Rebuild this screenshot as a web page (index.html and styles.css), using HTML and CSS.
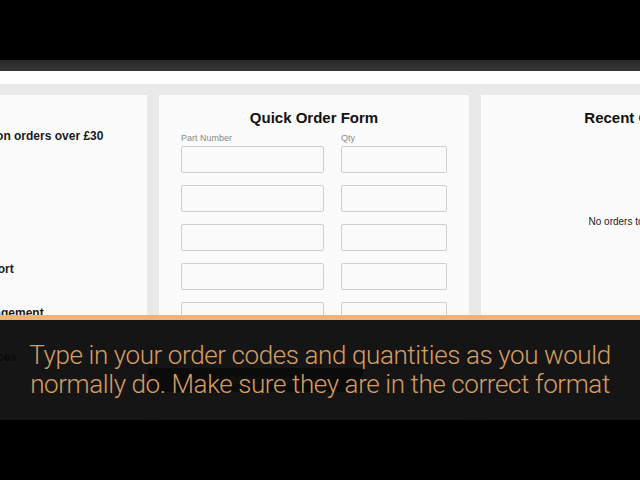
FILE: index.html
```html
<!DOCTYPE html>
<html>
<head>
<meta charset="utf-8">
<link rel="stylesheet" href="styles.css">
</head>
<body>
<div class="screen">
  <div class="topbar"></div>
  <div class="strip"></div>
  <div class="content">
    <div class="panel left">
      <ul class="features">
        <li class="f1">Free UK delivery on orders over £30</li>
        <li class="f2">Technical Support</li>
        <li class="f3">Account Management</li>
        <li class="f4">Competitive Prices</li>
      </ul>
    </div>
    <div class="panel middle">
      <h2 class="title">Quick Order Form</h2>
      <div class="form">
        <div class="col part">
          <label class="lbl">Part Number</label>
          <div class="inp"></div>
          <div class="inp"></div>
          <div class="inp"></div>
          <div class="inp"></div>
          <div class="inp"></div>
        </div>
        <div class="col qty">
          <label class="lbl">Qty</label>
          <div class="inp"></div>
          <div class="inp"></div>
          <div class="inp"></div>
          <div class="inp"></div>
          <div class="inp"></div>
        </div>
      </div>
      <div class="addbtn">Add to basket</div>
    </div>
    <div class="panel right">
      <h2 class="title">Recent Orders</h2>
      <p class="empty">No orders to display</p>
    </div>
  </div>
  <div class="caption">
    <p class="caption-text">Type in your order codes and quantities as you would<br>normally do. Make sure they are in the correct format</p>
  </div>
</div>
</body>
</html>
```
FILE: styles.css
```css
html, body {
  margin: 0;
  padding: 0;
}
body {
  background: #000;
  width: 640px;
  height: 480px;
  overflow: hidden;
  font-family: "Liberation Sans", Arial, sans-serif;
}
.screen {
  margin-top: 60px;
  height: 360px;
  position: relative;
  overflow: hidden;
  background: #fff;
}
.topbar {
  height: 11px;
  background: linear-gradient(#2a2a2a, #353535);
}
.strip {
  height: 13px;
  background: #fff;
}
.content {
  background: #e9e9e9;
  padding-top: 11px;
  display: flex;
  gap: 12px;
  margin-left: -163px;
  height: 400px;
}
.panel {
  width: 310px;
  flex: none;
  background: #fbfbfb;
  box-sizing: border-box;
}
.features {
  list-style: none;
  margin: 0;
  padding: 34px 0 0 61px;
  font-weight: bold;
  font-size: 12px;
  color: #1a1a1a;
}
.features li {
  height: 15px;
  line-height: 15px;
}
.features .f2 { margin-top: 118px; margin-left: 12px; }
.features .f3 { margin-top: 29px; margin-left: 21px; }
.features .f4 { margin-top: 29px; margin-left: 11px; }
.middle {
  padding: 0 22px;
}
.title {
  margin: 0;
  padding-top: 14px;
  font-size: 15px;
  line-height: 18px;
  font-weight: bold;
  text-align: center;
  color: #111;
}
.form {
  display: flex;
  gap: 17px;
  margin-top: 6px;
}
.col {
  display: flex;
  flex-direction: column;
  gap: 12px;
}
.part { width: 143px; }
.qty { width: 106px; }
.lbl {
  font-size: 9px;
  line-height: 11px;
  color: #8a8a8a;
  margin-bottom: -10px;
}
.inp {
  height: 27px;
  box-sizing: border-box;
  border: 1px solid #cfcfcf;
  border-radius: 2px;
  background: #fafafa;
}
.addbtn {
  margin-top: 39px;
  width: 215px;
  margin-left: -33px;
  height: 24px;
  background: #2f3a2f;
  color: #ddd;
  font-size: 11px;
  line-height: 24px;
  text-align: center;
}
.empty {
  margin: 0;
  padding: 89px 6px 0 0;
  font-size: 10px;
  text-align: center;
  color: #222;
}
.caption {
  position: absolute;
  left: 0;
  right: 0;
  bottom: 0;
  height: 100px;
  background: rgba(8, 8, 8, 0.95);
  border-top: 5px solid #c9853f;
  border-image: linear-gradient(#f0b575, #c98a48 50%, #6a3e18) 1;
  display: flex;
  align-items: center;
  justify-content: center;
}
.caption-text {
  margin: 0;
  font-family: Roboto, "Liberation Sans", sans-serif;
  font-weight: 300;
  font-size: 26px;
  line-height: 29px;
  color: #d89d61;
  text-align: center;
  white-space: nowrap;
  letter-spacing: -0.4px;
}
```
